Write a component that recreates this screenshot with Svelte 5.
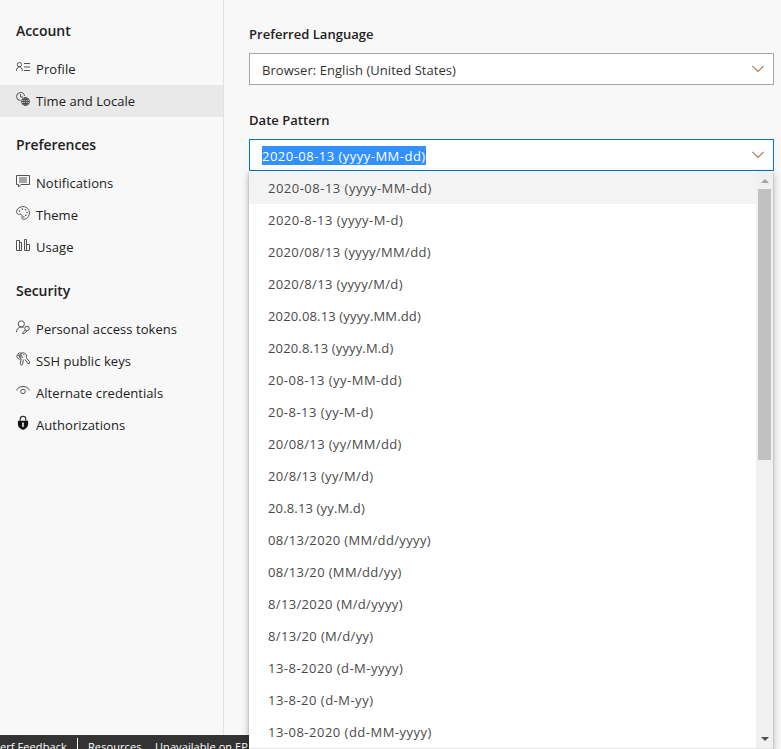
<script>
  const groups = [
    { title: 'Account', items: [
      { label: 'Profile', icon: 'profile' },
      { label: 'Time and Locale', icon: 'locale', active: true }
    ] },
    { title: 'Preferences', items: [
      { label: 'Notifications', icon: 'message' },
      { label: 'Theme', icon: 'palette' },
      { label: 'Usage', icon: 'usage' }
    ] },
    { title: 'Security', items: [
      { label: 'Personal access tokens', icon: 'token' },
      { label: 'SSH public keys', icon: 'keys' },
      { label: 'Alternate credentials', icon: 'eye' },
      { label: 'Authorizations', icon: 'lock' }
    ] }
  ];
  const patterns = [
    '2020-08-13 (yyyy-MM-dd)', '2020-8-13 (yyyy-M-d)', '2020/08/13 (yyyy/MM/dd)',
    '2020/8/13 (yyyy/M/d)', '2020.08.13 (yyyy.MM.dd)', '2020.8.13 (yyyy.M.d)',
    '20-08-13 (yy-MM-dd)', '20-8-13 (yy-M-d)', '20/08/13 (yy/MM/dd)',
    '20/8/13 (yy/M/d)', '20.8.13 (yy.M.d)', '08/13/2020 (MM/dd/yyyy)',
    '08/13/20 (MM/dd/yy)', '8/13/2020 (M/d/yyyy)', '8/13/20 (M/d/yy)',
    '13-8-2020 (d-M-yyyy)', '13-8-20 (d-M-yy)', '13-08-2020 (dd-MM-yyyy)'
  ];
</script>

{#snippet chevron()}
  <svg class="chevron" width="12" height="8" viewBox="0 0 12 8"><path d="M.4 .8 6 6.400 11.600 .8" /></svg>
{/snippet}

{#snippet glyph(name)}
  <svg class="glyph" width="14" height="14" viewBox="0 0 14 14">
    {#if name === 'profile'}
      <circle cx="3.4" cy="4.7" r="2.1" /><path d="M.4 11C.4 8.4 1.6 7 3.4 7s3 1.400 3 4M8 3.500h6M8 7h6M8 10.500h6" />
    {:else if name === 'locale'}
      <path d="M4.500 8.500A4 4 0 1 1 8.500 4M4.500 2v3H7" />
      <circle cx="9.500" cy="9.500" r="4" /><ellipse cx="9.500" cy="9.500" rx="1.800" ry="4" /><path d="M9.500 5.500v8M5.500 9.500h8M6.200 7.500h6.600M6.200 11.500h6.600" />
    {:else if name === 'message'}
      <path d="M.5 1.500h13v9H5L2.500 13v-2.500h-2zM3 4h8M3 6h8M3 8h8" />
    {:else if name === 'palette'}
      <path d="M.6 5.200C1.200 2.300 3.800.6 7 .6c3.700 0 6.400 2.700 6.400 6.300S10.800 13.400 7.500 13.400C5 13.400 6.400 10.800 5.900 9.300 5.400 7.600 4.100 8.500 2.700 8.300 1.100 8.100.3 6.700.6 5.200z" />
      <g class="dots"><circle cx="3.500" cy="5" r=".8" /><circle cx="6.300" cy="3.100" r=".8" /><circle cx="9.500" cy="3.700" r=".8" /><circle cx="11" cy="6.500" r=".8" /><circle cx="9.800" cy="9.200" r=".8" /><circle cx="7.800" cy="11" r=".8" /></g>
    {:else if name === 'usage'}
      <path d="M.5 2.500h3v10h-3zM3.500 4.500h2v8h-2M8.500 1.500h2v11h-2zM10.500 6.500h3v6h-3" />
    {:else if name === 'token'}
      <circle cx="5.300" cy="3.900" r="3.100" /><path d="M.4 12.200C.7 8.800 2.600 7 5.300 7c1 0 1.700.2 2.300.6" />
      <circle cx="11" cy="8.500" r="2.300" /><path d="M9.300 10.200 6.500 12.800v.8h1.800l2.500-2.800M11.300 8.100h.4" />
    {:else if name === 'keys'}
      <path d="M2.300 6.900A3.200 3.200 0 1 1 6 1.500M2.300 6.900 3.500 7.500" />
      <circle cx="3" cy="3.300" r=".6" />
      <path d="M5.100 7.100A3.500 3.500 0 1 1 10.300 5.700L13.500 9.800v1.700h-1.700L9 7.400M5.100 7.100 4.300 11.500 5.300 13.400 6.700 12 7.300 7.600" />
      <path d="M5 3.500C3.500 4.700 3.500 7 5.100 7.100M7.300 2.200l1.300 1.300M5 2.500 6.500 6" />
    {:else if name === 'eye'}
      <path d="M.4 6.400C1.500 3.800 4 2.500 7 2.500s5.500 1.300 6.600 3.900" /><circle cx="7" cy="7.500" r="2.200" />
    {:else}
      <path class="shackle" d="M4.200 4.800V3.200a2.800 2.800 0 0 1 5.600 0v1.600" />
      <path class="solid" d="M1.900 4.800h10.200v3.500c0 2.800-2.500 4.500-5.100 5.600-2.600-1.100-5.100-2.800-5.100-5.600z" />
      <circle class="keyhole" cx="7" cy="7.500" r="1.100" /><path class="keyhole" d="M6.400 7.700h1.200l.6 3H5.800z" />
    {/if}
  </svg>
{/snippet}

<div class="page">
  <div class="body">
    <nav>
      {#each groups as group}
        <section>
          <h2>{group.title}</h2>
          {#each group.items as item}
            <a class:active={item.active}>{@render glyph(item.icon)}<span>{item.label}</span></a>
          {/each}
        </section>
      {/each}
    </nav>
    <main>
      <div class="field">
        <div class="label">Preferred Language</div>
        <div class="combo"><span class="lang">Browser: English (United States)</span>{@render chevron()}</div>
      </div>
      <div class="field">
        <div class="label">Date Pattern</div>
        <div class="combo open"><span class="selected">2020-08-13 (yyyy-MM-dd)</span>{@render chevron()}</div>
        <div class="menu">
          <div class="options">
            {#each patterns as pattern, i}
              <div class="option" class:current={i === 0} class:dashed={pattern.includes('-')} class:slashed={pattern.includes('/')}>{pattern}</div>
            {/each}
          </div>
          <div class="scrollbar">
            <svg width="8" height="4" viewBox="0 0 8 4"><path d="M0 4 4 0l4 4z" fill="#a3a3a3" /></svg>
            <div class="thumb"></div>
            <svg class="down" width="8" height="4" viewBox="0 0 8 4"><path d="M0 0h8L4 4z" fill="#505050" /></svg>
          </div>
        </div>
      </div>
    </main>
  </div>
  <footer><span class="feedback">erf Feedback</span><i></i><span class="resources">Resources</span><span class="status">Unavailable on EP</span></footer>
</div>

<style>
  :global(body) { margin: 0; overflow: hidden; }
  * { box-sizing: border-box; }
  .page { width: 781px; height: 749px; background: #f8f8f8; font-family: "Open Sans", "Noto Sans", sans-serif; font-size: 13px; color: #212121; display: flex; flex-direction: column; overflow: hidden; }
  .body { height: 735px; display: flex; flex: none; }
  nav { width: 224px; border-right: 1px solid #e2e2e2; padding-top: 9px; }
  section { margin-bottom: 6px; }
  h2 { margin: 0; padding: 0 16px; height: 44px; line-height: 44px; font-size: 14px; font-weight: 600; letter-spacing: -.05px; }
  a { display: flex; align-items: center; height: 32px; padding-left: 16px; gap: 6px; letter-spacing: .06px; }
  .glyph { position: relative; top: -2px; fill: none; stroke: #4a4a4a; stroke-width: .95; flex: none; overflow: visible; }
  a.active { background: #e9e9e9; }
  .dots { fill: #444; stroke: none; }
  .shackle { stroke: #333; stroke-width: 1.2; }
  .solid { fill: #111; stroke: none; }
  .keyhole { fill: #ddd; stroke: none; }
  main { padding: 24px 0 0 25px; width: 550px; }
  .field { position: relative; height: 86px; }
  .label { height: 29px; line-height: 20px; font-weight: 600; letter-spacing: .03px; }
  .combo { height: 32px; width: 525px; border: 1px solid #a6a6a6; background: #fff; display: flex; align-items: center; padding: 0 9px 0 12px; justify-content: space-between; color: #333; }
  .combo.open { border-color: #0078d4; }
  .lang { padding-top: 2px; letter-spacing: .05px; }
  .chevron { fill: none; stroke: #a87850; stroke-width: 1.100; }
  .selected { background: #3390ff; color: #fff; height: 19px; line-height: 20px; letter-spacing: .48px; }
  .menu { position: absolute; top: 61px; left: 0; width: 524px; height: 578px; border-bottom: 1px solid #e4e4e4; background: #fff; display: flex; box-shadow: 0 3px 7px rgba(0,0,0,.3), 0 1px 2px rgba(0,0,0,.2); z-index: 2; }
  .options { flex: 1; padding-top: 1px; overflow: hidden; color: #4a4a4a; }
  .option { height: 32px; line-height: 32px; padding-left: 19px; letter-spacing: .15px; }
  .option.dashed { letter-spacing: .49px; }
  .option.slashed { letter-spacing: .35px; }
  .option.current { background: #f3f3f3; }
  .scrollbar { width: 17px; background: #f0f0f0; display: flex; flex-direction: column; align-items: center; padding: 8px 0 7px; }
  .thumb { width: 13px; height: 271px; background: #c1c1c1; margin-top: 6px; }
  .down { margin-top: auto; }
  footer { height: 14px; width: 250px; flex: none; background: #333; color: #fff; font-size: 11px; line-height: 23px; letter-spacing: .08px; display: flex; white-space: nowrap; overflow: hidden; }
  footer i { flex: none; width: 1px; height: 11px; background: #fff; margin: 3px 10px 0; }
  .feedback { width: 67px; flex: none; }
  .resources { width: 67px; flex: none; }
</style>
